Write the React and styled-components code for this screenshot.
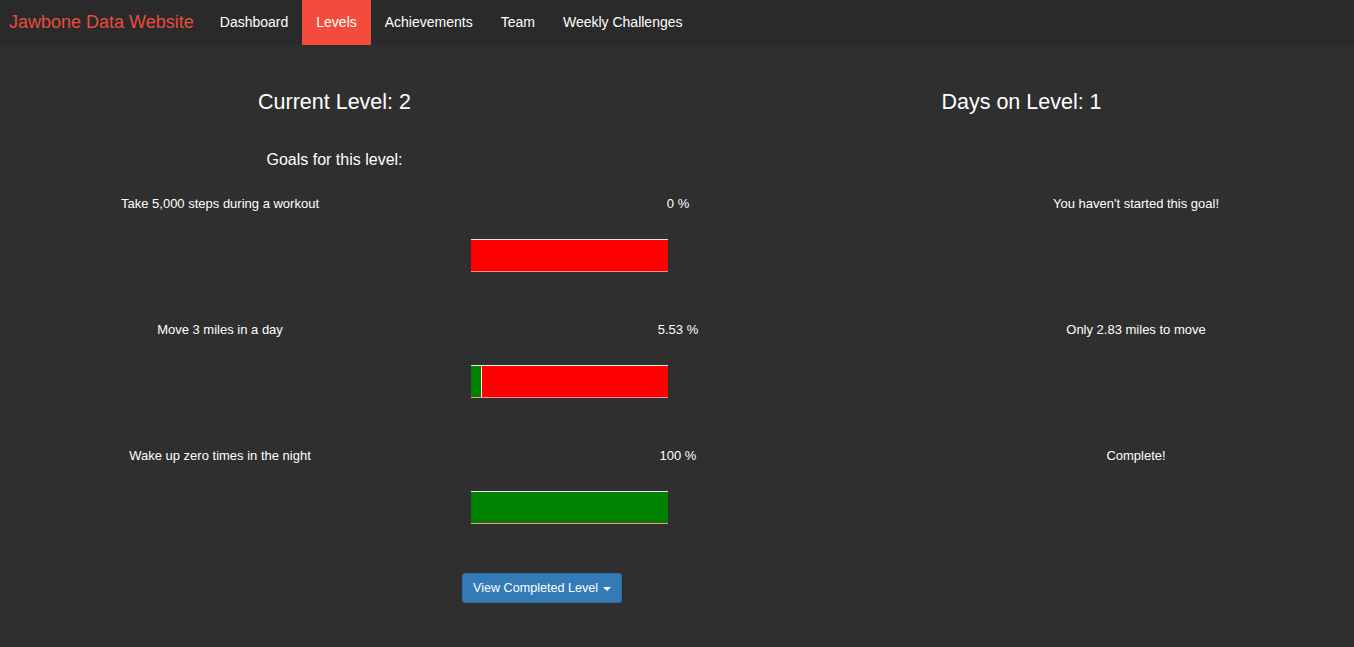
import React from "react";
import styled, { createGlobalStyle } from "styled-components";

const Global = createGlobalStyle`
  html, body { margin: 0; padding: 0; background: #2f2f2f; overflow-x: hidden; }
  body { font-family: "Liberation Sans", Arial, Helvetica, sans-serif; color: #fff; }
`;

const Navbar = styled.nav`
  display: flex;
  align-items: stretch;
  height: 45px;
  background: #2a2a2a;
`;

const Brand = styled.a`
  display: flex;
  align-items: center;
  padding: 0 12px 0 9px;
  font-size: 18px;
  color: #e74c3c;
  text-decoration: none;
`;

const NavLink = styled.a`
  display: flex;
  align-items: center;
  padding: 0 14px 1px;
  font-size: 14px;
  color: #fff;
  text-decoration: none;
  background: ${(p) => (p.$active ? "#f34c3c" : "transparent")};
`;

const Page = styled.main`
  margin: 0 -11px 0 -9px;
  padding-top: 44px;
`;

const HalfRow = styled.div`
  display: grid;
  grid-template-columns: 1fr 1fr;
`;

const Title = styled.h3`
  margin: 0;
  text-align: center;
  font-size: 21.5px;
  font-weight: 400;
  line-height: 26px;
`;

const Subtitle = styled.h4`
  margin: 35px 0 0;
  text-align: center;
  font-size: 16px;
  font-weight: 400;
  line-height: 20px;
`;

const Goal = styled.section`
  display: grid;
  grid-template-columns: repeat(3, 1fr);
  margin-top: ${(p) => (p.$first ? "25px" : "49px")};
`;

const Cell = styled.div`
  text-align: center;
  font-size: 13px;
  line-height: 18px;
`;

const BarCell = styled.div`
  grid-column: 2;
  padding: 26px 0 0 22px;
`;

const Bar = styled.div`
  display: flex;
  width: 197px;
  height: 31px;
  border-top: 1px solid #eaeaea;
  border-bottom: 1px solid rgba(255, 255, 255, 0.55);
  background: #ff0000;
`;

const Fill = styled.div`
  background: #008000;
  height: 100%;
  border-right: ${(p) => (p.$partial ? "1px solid #f2f2f2" : "none")};
  box-sizing: border-box;
`;

const ButtonRow = styled.div`
  padding: 49px 0 0 471px;
`;

const Button = styled.button`
  display: inline-flex;
  align-items: center;
  gap: 5px;
  height: 30px;
  padding: 0 10px;
  font-family: inherit;
  font-size: 12.6px;
  color: #fff;
  background: #337ab7;
  border: 1px solid #2e6da4;
  border-radius: 3px;
`;

const Caret = styled.span`
  display: inline-block;
  width: 0;
  height: 0;
  margin-top: 1px;
  border-top: 4px solid #fff;
  border-left: 4px solid transparent;
  border-right: 4px solid transparent;
`;

const goals = [
  { name: "Take 5,000 steps during a workout", pct: 0, label: "0 %", msg: "You haven't started this goal!" },
  { name: "Move 3 miles in a day", pct: 5.53, label: "5.53 %", msg: "Only 2.83 miles to move" },
  { name: "Wake up zero times in the night", pct: 100, label: "100 %", msg: "Complete!" },
];

export default function App() {
  return (
    <>
      <Global />
      <Navbar>
        <Brand href="#">Jawbone Data Website</Brand>
        <NavLink href="#">Dashboard</NavLink>
        <NavLink href="#" $active>Levels</NavLink>
        <NavLink href="#">Achievements</NavLink>
        <NavLink href="#">Team</NavLink>
        <NavLink href="#">Weekly Challenges</NavLink>
      </Navbar>
      <Page>
        <HalfRow>
          <Title>Current Level: 2</Title>
          <Title>Days on Level: 1</Title>
        </HalfRow>
        <HalfRow>
          <Subtitle>Goals for this level:</Subtitle>
        </HalfRow>
        {goals.map((g, i) => (
          <Goal key={g.name} $first={i === 0}>
            <Cell>{g.name}</Cell>
            <Cell>{g.label}</Cell>
            <Cell>{g.msg}</Cell>
            <BarCell>
              <Bar>
                {g.pct > 0 && (
                  <Fill
                    $partial={g.pct < 100}
                    style={{ width: `${g.pct}%`, minWidth: g.pct < 100 ? "11px" : undefined }}
                  />
                )}
              </Bar>
            </BarCell>
          </Goal>
        ))}
        <ButtonRow>
          <Button>
            View Completed Level <Caret />
          </Button>
        </ButtonRow>
      </Page>
    </>
  );
}
